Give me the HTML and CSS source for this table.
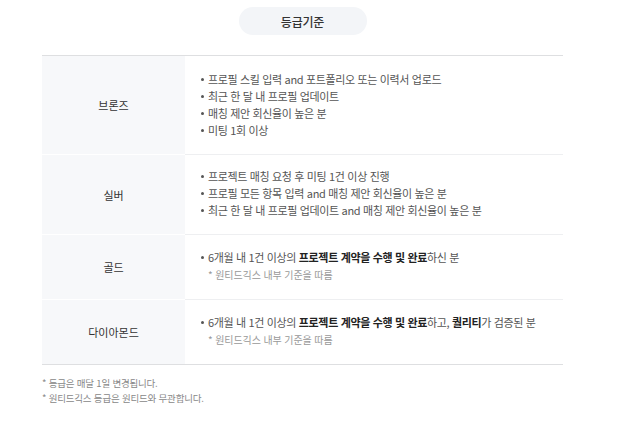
FILE: index.html
```html
<!DOCTYPE html>
<html lang="ko">
<head>
<meta charset="utf-8">
<link rel="stylesheet" href="styles.css">
</head>
<body>
<div class="page">
  <div class="tab-wrap"><div class="tab">등급기준</div></div>
  <div class="grade-table">
    <div class="row r1">
      <div class="label">브론즈</div>
      <div class="desc">
        <ul>
          <li>프로필 스킬 입력 and 포트폴리오 또는 이력서 업로드</li>
          <li>최근 한 달 내 프로필 업데이트</li>
          <li>매칭 제안 회신율이 높은 분</li>
          <li>미팅 1회 이상</li>
        </ul>
      </div>
    </div>
    <div class="row r2">
      <div class="label">실버</div>
      <div class="desc">
        <ul>
          <li>프로젝트 매칭 요청 후 미팅 1건 이상 진행</li>
          <li>프로필 모든 항목 입력 and 매칭 제안 회신율이 높은 분</li>
          <li>최근 한 달 내 프로필 업데이트 and 매칭 제안 회신율이 높은 분</li>
        </ul>
      </div>
    </div>
    <div class="row r3">
      <div class="label">골드</div>
      <div class="desc">
        <ul>
          <li>6개월 내 1건 이상의 <b>프로젝트 계약을 수행 및 완료</b>하신 분</li>
        </ul>
        <p class="note">* 원티드긱스 내부 기준을 따름</p>
      </div>
    </div>
    <div class="row r4">
      <div class="label">다이아몬드</div>
      <div class="desc">
        <ul>
          <li>6개월 내 1건 이상의 <b>프로젝트 계약을 수행 및 완료</b>하고, <b>퀄리티</b>가 검증된 분</li>
        </ul>
        <p class="note">* 원티드긱스 내부 기준을 따름</p>
      </div>
    </div>
  </div>
  <div class="footnotes">
    <p>* 등급은 매달 1일 변경됩니다.</p>
    <p>* 원티드긱스 등급은 원티드와 무관합니다.</p>
  </div>
</div>
</body>
</html>
```
FILE: styles.css
```css
* { box-sizing: border-box; }
html, body { margin: 0; padding: 0; background: #fff; }
body {
  font-family: "Noto Sans CJK KR", "Noto Sans", sans-serif;
  color: #333;
}
.page {
  width: 639px;
  padding: 7px 0 0 42px;
}
.tab-wrap {
  width: 521px;
  display: flex;
  justify-content: center;
}
.tab {
  width: 128px;
  height: 28px;
  border-radius: 14px;
  background: #f3f5f8;
  font-size: 12px;
  font-weight: 500;
  color: #333;
  display: flex;
  align-items: center;
  justify-content: center;
  letter-spacing: -0.2px;
}
.grade-table {
  margin-top: 20px;
  width: 521px;
  border-top: 1px solid #dedfe1;
  border-bottom: 1px solid #dedfe1;
}
.row {
  display: flex;
}
.row + .row .desc { border-top: 1px solid #eeeff1; }
.row + .row .label { border-top: 1px solid #fff; }
.label {
  width: 143px;
  flex: none;
  background: #f7f8fa;
  display: flex;
  align-items: center;
  justify-content: center;
  font-size: 11px;
  color: #333;
}
.desc {
  flex: 1;
  padding: 14px 0 14px 16px;
  font-size: 11px;
  color: #555;
  line-height: 17px;
}
.r1 { height: 98px; }
.r2 { height: 80px; }
.r3 { height: 65px; }
.r4 { height: 65px; }
.r1 .desc { padding-top: 15px; }
.r2 .desc { padding-top: 13px; }
.r3 .desc, .r4 .desc { padding-top: 14px; }
ul { margin: 0; padding: 0; list-style: none; }
li { position: relative; padding-left: 7px; letter-spacing: -0.35px; }
li::before {
  content: "";
  position: absolute;
  left: 0;
  top: 7px;
  width: 3px;
  height: 3px;
  border-radius: 50%;
  background: #555;
}
b { font-weight: 700; color: #222; }
.note {
  margin: 0;
  padding-left: 7px;
  font-size: 10px;
  color: #999;
  line-height: 17px;
  letter-spacing: -0.1px;
}
.footnotes {
  margin-top: 11px;
  font-size: 9.5px;
  color: #888;
  line-height: 15px;
  letter-spacing: -0.2px;
}
.footnotes p { margin: 0; }
```
